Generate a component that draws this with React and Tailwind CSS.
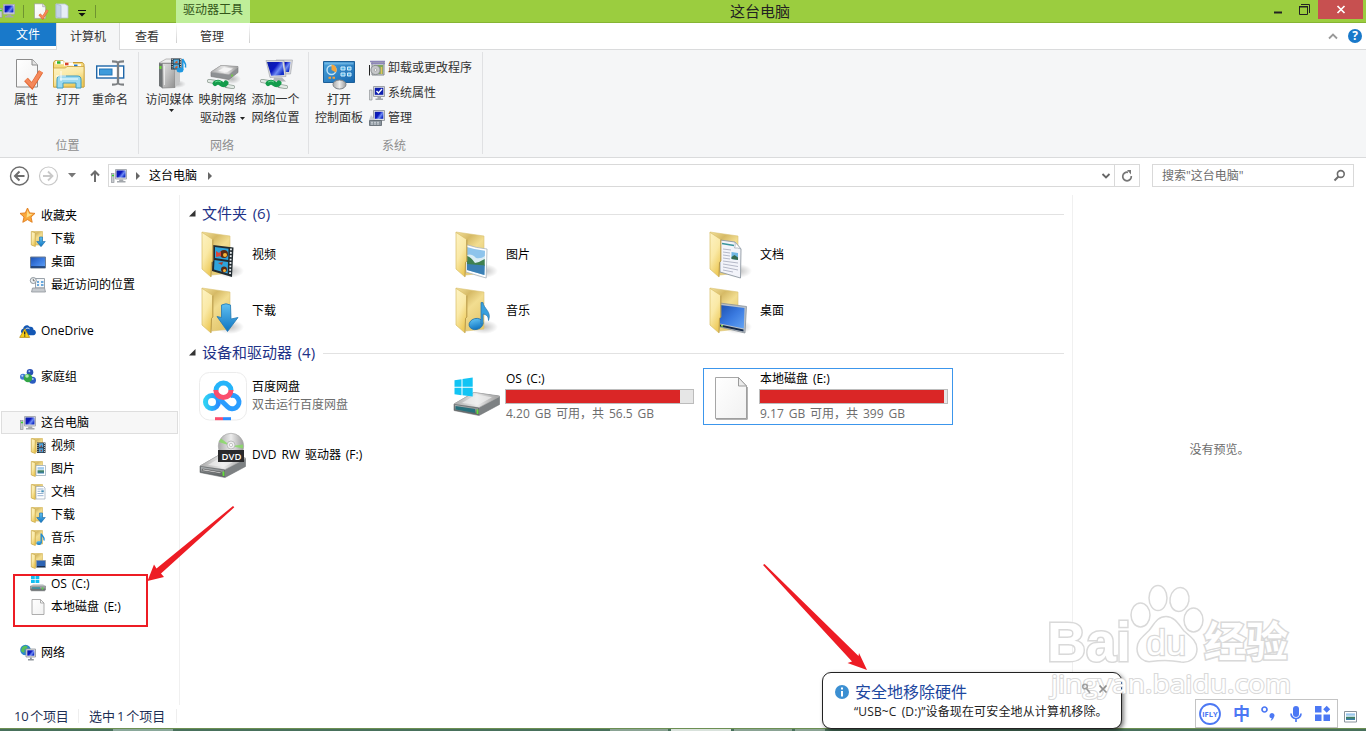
import React from 'react'

/* ---------- shared gradients ---------- */

function Gradients() {
  return (
    <svg className="absolute size-0" aria-hidden="true">
      <defs>
        <linearGradient id="flap" x1="0" y1="0" x2="0.5" y2="1">
          <stop offset="0" stopColor="#fdf3c4" /><stop offset="0.55" stopColor="#fae9a6" /><stop offset="1" stopColor="#eecb5c" />
        </linearGradient>
        <linearGradient id="back" x1="0" y1="0" x2="0.6" y2="1">
          <stop offset="0" stopColor="#f4e29c" /><stop offset="0.3" stopColor="#d6ba66" /><stop offset="0.55" stopColor="#f2dd90" /><stop offset="1" stopColor="#e4c870" />
        </linearGradient>
        <linearGradient id="blue" x1="0" y1="0" x2="0" y2="1">
          <stop offset="0" stopColor="#5fc0f2" /><stop offset="1" stopColor="#0f74c0" />
        </linearGradient>
        <linearGradient id="screen" x1="0" y1="0" x2="1" y2="0.6">
          <stop offset="0" stopColor="#0a1ea4" /><stop offset="0.5" stopColor="#0c18c0" /><stop offset="0.75" stopColor="#6f8cf4" /><stop offset="1" stopColor="#1430c8" />
        </linearGradient>
        <linearGradient id="desk" x1="0" y1="0" x2="1" y2="1">
          <stop offset="0" stopColor="#1c50b0" /><stop offset="0.5" stopColor="#3a7ae0" /><stop offset="1" stopColor="#64a4f4" />
        </linearGradient>
        <linearGradient id="metal" x1="0" y1="0" x2="1" y2="0">
          <stop offset="0" stopColor="#a8a8a8" /><stop offset="0.5" stopColor="#ececec" /><stop offset="1" stopColor="#9b9b9b" />
        </linearGradient>
        <linearGradient id="face" x1="0" y1="0" x2="1" y2="1">
          <stop offset="0" stopColor="#e2e2e2" /><stop offset="0.5" stopColor="#bcbcbc" /><stop offset="1" stopColor="#8e8e8e" />
        </linearGradient>
        <linearGradient id="side" x1="0" y1="0" x2="0" y2="1">
          <stop offset="0" stopColor="#b9bcbe" /><stop offset="1" stopColor="#55595b" />
        </linearGradient>
        <linearGradient id="paper" x1="0" y1="0" x2="1" y2="1">
          <stop offset="0" stopColor="#ffffff" /><stop offset="1" stopColor="#f1f1f1" />
        </linearGradient>
        <linearGradient id="sky" x1="0" y1="0" x2="0" y2="1">
          <stop offset="0" stopColor="#7fb6e8" /><stop offset="0.45" stopColor="#cfe7f4" /><stop offset="0.55" stopColor="#3f7f52" /><stop offset="1" stopColor="#3c80b8" />
        </linearGradient>
        <linearGradient id="panel" x1="0" y1="0" x2="1" y2="1">
          <stop offset="0" stopColor="#4aa3dc" /><stop offset="1" stopColor="#1767ae" />
        </linearGradient>
        <linearGradient id="ring" x1="0" y1="0" x2="1" y2="0">
          <stop offset="0" stopColor="#2fd0f4" /><stop offset="1" stopColor="#2a8dff" />
        </linearGradient>
        <radialGradient id="shade">
          <stop offset="0" stopColor="#000" stopOpacity="0.25" /><stop offset="1" stopColor="#000" stopOpacity="0" />
        </radialGradient>
      </defs>
    </svg>
  )
}

function Svg({ w = 16, h = w, box, className = '', children }) {
  return (
    <svg width={w} height={h} viewBox={box || `0 0 ${w} ${h}`} fill="none" className={`shrink-0 overflow-visible ${className}`}>
      {children}
    </svg>
  )
}

/* ---------- 16px icons ---------- */

const Pc = () => (
  <Svg>
    <rect x="0.5" y="5.500" width="2.500" height="9" fill="#c9ccd0" stroke="#90959a" strokeWidth="0.7" />
    <path d="M1 7.500h2" stroke="#39d22e" strokeWidth="1.4" />
    <path d="M4.500 1.500h11v9.500h-11z" fill="#dfe0e2" stroke="#a9adb3" />
    <path d="M5.500 2.500h9v7h-9z" fill="url(#screen)" />
    <path d="M8.500 11.500h3.500l.5 1.500h2v1.500H6V13h2z" fill="#a3a7ac" />
  </Svg>
)

const Star = () => (
  <Svg>
    <path d="M7.500 0l2.200 4.900 5.300.5-4 3.600 1.200 5.300-4.700-2.700-4.700 2.700L4 9 0 5.400l5.300-.5z" fill="#f9a83a" stroke="#e07a18" strokeWidth="0.9" />
    <path d="M7.500 2L9 5.800l3.500.4-6 3.500z" fill="#fde08a" />
  </Svg>
)

const SmallFolder = ({ children }) => (
  <Svg>
    <path d="M2 .500h10.500v13.500H2z" fill="url(#back)" stroke="#d5b555" strokeWidth="0.6" />
    <path d="M1.300.500l4 1.200V15.500L1.300 14z" fill="url(#flap)" stroke="#c9a748" strokeWidth="0.7" />
    {children}
  </Svg>
)

const FolderDown = () => (
  <SmallFolder><path d="M9.500 6h3v4.500h2.800L11 15.700 6.700 10.500h2.800z" fill="url(#blue)" stroke="#1a6cb0" strokeWidth="0.6" /></SmallFolder>
)
const FolderVideo = () => (
  <SmallFolder>
    <path d="M7 4.500h8.500v10.500H7z" fill="#2b3640" />
    <path d="M9 5.300h4.300v4H9zM9 10.300h4.300v4H9z" fill="#52a2d8" />
    <path d="M14.500 5v10M7.900 5v10" stroke="#dfe6ea" strokeWidth="0.8" strokeDasharray="1 1" />
    <path d="M10 8.500l2-1.500v2zM10 13l2-1.500v2z" fill="#a3412f" />
  </SmallFolder>
)
const FolderPicture = () => (
  <SmallFolder>
    <path d="M6 4.500h9.500v10H6z" fill="#fff" stroke="#8fa6b8" strokeWidth="0.7" />
    <path d="M7.500 6.300h6.500v6.200H7.500z" fill="url(#sky)" />
  </SmallFolder>
)
const FolderDoc = () => (
  <SmallFolder>
    <path d="M6 2.500h7.500l1.500 1.500v11H6z" fill="#fff" stroke="#9aa8b4" strokeWidth="0.7" />
    <path d="M7.500 5h6M7.500 7.300h3M7.500 9.500h6M7.500 11.700h6" stroke="#7f9fc4" strokeWidth="0.8" />
    <path d="M11.300 6.300h2.500v2h-2.500z" fill="#4790b8" />
  </SmallFolder>
)
const FolderMusic = () => (
  <SmallFolder>
    <ellipse cx="9" cy="13" rx="2.700" ry="2" fill="url(#blue)" />
    <path d="M11.200 13V3.500c.2 2.500 4 3.500 2.800 7" stroke="#238bd0" strokeWidth="1.400" />
  </SmallFolder>
)
const FolderDesk = () => (
  <SmallFolder>
    <path d="M6.500 7.500h9v7h-9z" fill="#2d64b4" stroke="#8c949c" strokeWidth="0.8" />
    <path d="M7 13.600h8" stroke="#1d2c44" />
  </SmallFolder>
)
const Desktop = () => (
  <Svg>
    <path d="M.5 3h15v11H.5z" fill="url(#desk)" stroke="#6d7d92" />
    <path d="M1 13h14" stroke="#14305e" strokeWidth="1.400" />
  </Svg>
)
const Recent = () => (
  <Svg>
    <path d="M5.500 1.500h9v9.500h-9z" fill="#f3f6f8" stroke="#9ba3ab" />
    <path d="M7 5h2M11 5h2.500M7 8h2M11 8h2.500" stroke="#3d8fd4" strokeWidth="1.500" />
    <circle cx="3.300" cy="3.500" r="3" fill="#eef1f3" stroke="#8c949b" />
    <path d="M3.300 1.800v2h1.500" stroke="#555" strokeWidth="0.8" />
    <path d="M2.500 11h12l1 4h-14z" fill="#c6cace" stroke="#90969c" strokeWidth="0.8" />
  </Svg>
)
const OneDrive = () => (
  <Svg>
    <path d="M2.500 10.500C0 9.500.8 6.200 3.200 5.800 3.500 2 8 .8 9.800 4c2-.6 3.700.7 3.700 2.800 3.300.4 3.200 5.400 0 5.400H6z" fill="#1357b4" />
    <path d="M4.500 8c.5-2.500 3-3.700 5-2.200" stroke="#fff" strokeWidth="0.9" />
    <path d="M4.700 5.700l5 8.700H-.3z" fill="#fcd116" stroke="#a87d08" strokeWidth="0.700" />
    <path d="M4.700 8.500v3M4.700 12.400v1" stroke="#222" strokeWidth="1.300" />
  </Svg>
)
const HomeGroup = () => (
  <Svg>
    <circle cx="10" cy="3.300" r="3.300" fill="#2750b4" />
    <circle cx="3" cy="7.800" r="3" fill="#3f78d4" />
    <circle cx="12.500" cy="11.300" r="3.500" fill="#2c5cc0" />
    <circle cx="8" cy="9" r="4.300" fill="#32a546" />
    <circle cx="9.300" cy="2.300" r="1" fill="#a8c6f4" />
    <circle cx="2.300" cy="6.800" r="1" fill="#b8d4f8" />
    <circle cx="7" cy="7" r="1.800" fill="#b2ebb0" />
    <circle cx="12.800" cy="10" r="1" fill="#9fc0f4" />
  </Svg>
)
const SmallDrive = () => (
  <Svg>
    <path d="M1 0h3.800v3.300H1zM5.500 0h3.800v3.300H5.500zM1 4h3.800v3H1zM5.500 4h3.800v3H5.500z" fill="#10bdf2" />
    <path d="M3 8h10l2.500 2.500H.5z" fill="#d5d8da" />
    <path d="M.5 10h15v4l-1 .8h-13l-1-.8z" fill="url(#side)" stroke="#73787b" strokeWidth="0.600" />
    <path d="M2 12h8" stroke="#2f8f9f" strokeWidth="1.400" />
    <path d="M12.500 11.500v2" stroke="#50e040" strokeWidth="1.400" />
  </Svg>
)
const SmallFile = () => (
  <Svg>
    <path d="M2 .5h8.500L14 4v11.500H2z" fill="url(#paper)" stroke="#9a9a9a" strokeWidth="0.800" />
    <path d="M10.500.5V4H14" stroke="#9a9a9a" strokeWidth="0.800" />
  </Svg>
)
const Network = () => (
  <Svg>
    <circle cx="5.500" cy="5" r="5.300" fill="#2c86cc" />
    <path d="M2 2.500c2-2.500 5-2.200 5.500-.5S4 3.500 4.500 6 2 7.500 1 6zM8 5.500l2-1v4z" fill="#56c058" />
    <path d="M6 4h9.500v8H6z" fill="#dfe1e4" stroke="#8f959b" strokeWidth="0.800" />
    <path d="M7.300 5.300h7v5.400h-7z" fill="url(#screen)" />
    <path d="M10 12.500h1.800v1.500h2v1.500H8V14h2z" fill="#8f969c" />
  </Svg>
)

/* ---------- title bar and ribbon icons ---------- */

const DocCheck = ({ size }) => (
  <Svg w={size} box="0 0 32 32">
    <path d="M6.500 1.500h16l5 5.500v22h-21z" fill="url(#paper)" stroke="#8c8c8c" />
    <path d="M22 1.500V7h5.500" fill="#e4e4e4" stroke="#8c8c8c" />
    <path d="M16 21.500l6 6.500L31 13.500" stroke="#e0632c" strokeWidth="5" />
    <path d="M16 21.500l6 6L31 13.500" stroke="#f4885a" strokeWidth="3.500" />
  </Svg>
)
const PaleFolder = () => (
  <Svg w={14} h={16}>
    <path d="M1 1h9l3 2v12H1z" fill="#e6edf6" stroke="#b7c4d6" strokeWidth="0.800" />
    <path d="M1 1l5 1.500V15l-5-1z" fill="#c3d2e6" stroke="#a9b9d0" strokeWidth="0.800" />
  </Svg>
)
const OpenFolder = () => (
  <Svg w={32}>
    <path d="M1.500 4.500L3 2.500h8l1.500 2h18l1.500 2V29h-30.500z" fill="#f5d97c" stroke="#c79a35" />
    <path d="M3.500 4.500h8M12 6h9M21 8h8" stroke="#fff" strokeWidth="3.500" />
    <path d="M5 4.500h3.500" stroke="#2fb32a" strokeWidth="2.500" />
    <path d="M13 6h3.500" stroke="#d8422d" strokeWidth="2.500" />
    <path d="M22 7.800h3.500" stroke="#1f77cf" strokeWidth="2.500" />
    <path d="M1.500 10h12l1.500-1.500h17V29h-30.500z" fill="url(#flap)" stroke="#cda43f" strokeWidth="0.800" />
    <path d="M5 30V22c0-3 1-4 4-4h16c3 0 4 1 4 4v8h-5v-5H11v5z" fill="#9ad9f0" stroke="#3d9dc4" />
    <path d="M8 21h18" stroke="#d8f3fc" strokeWidth="1.500" />
    <path d="M9 13v10M4 18h10" stroke="#fff" strokeWidth="0.900" />
  </Svg>
)
const Rename = () => (
  <Svg w={32}>
    <rect x="2.700" y="8" width="27" height="12" fill="#fff" stroke="#1f66a8" strokeWidth="1.400" />
    <rect x="5.500" y="11" width="12.500" height="6" fill="#3d9bdc" stroke="#2577b8" />
    <path d="M18 3.300c4 0 5.500.2 6 1.700.5-1.500 2-1.700 6-1.700M24 5v20M18 26.700c4 0 5.500-.2 6-1.700.5 1.500 2 1.700 6 1.700" stroke="#7c7f82" strokeWidth="2.300" />
  </Svg>
)
const MediaServer = () => (
  <Svg w={32}>
    <ellipse cx="23" cy="26" rx="9" ry="4" fill="url(#shade)" />
    <path d="M5 5L12 1h14l-6 4z" fill="#eeeeee" stroke="#aaa" strokeWidth="0.800" />
    <path d="M8 5.500h13v24L8 30z" fill="url(#face)" stroke="#888" strokeWidth="0.800" />
    <path d="M21 5.500l5-4V24l-5 5.500z" fill="#c6c7c8" />
    <path d="M5 5l3.500.5V30L5 28z" fill="#6f7375" />
    <path d="M10.500 8v19" stroke="#f0f0f0" strokeWidth="0.800" />
    <path d="M6.500 8v3" stroke="#6ad836" strokeWidth="2" />
    <rect x="17" y="0.500" width="10.500" height="11" fill="#26323c" />
    <path d="M19.500 1.500H25v4h-5.500zM19.500 6.500H25v4h-5.500z" fill="#4db0e4" />
    <path d="M20.500 4.500l3-2v3zM20.500 9.500l3-2v3z" fill="#d55a2c" />
    <path d="M18.200 1v10M26.400 1v10" stroke="#e8e8e8" strokeWidth="1" strokeDasharray="1.200 1.200" />
    <ellipse cx="26" cy="12" rx="3.400" ry="2.500" fill="#1e97e0" />
    <path d="M28.700 12V1c.500 3 4.300 4 2.800 8.500" stroke="#1e97e0" strokeWidth="1.600" />
  </Svg>
)
const Cable = () => (
  <>
    <path d="M2 23l7 1M19 28l7 1" stroke="#8b9a90" strokeWidth="4" strokeLinecap="round" />
    <path d="M2 23l6 1M20 28l6 1" stroke="#e1e9e4" strokeWidth="2.500" strokeLinecap="round" />
    <path d="M8 25.500q3-2.500 6 0t5-.500" stroke="#149c4c" strokeWidth="5" strokeLinecap="round" />
    <path d="M8 24q3-2 6 0" stroke="#5fd68c" strokeWidth="1" />
  </>
)
const MapDrive = () => (
  <Svg w={32}>
    <ellipse cx="25" cy="21" rx="9" ry="5" fill="url(#shade)" />
    <path d="M4 14L14 7.500l17 1v6L22 21.500 4 18.500z" fill="#8e9193" stroke="#777" strokeWidth="0.600" />
    <path d="M4 14L14 7.500l17 1.500-9 7.500z" fill="url(#metal)" stroke="#aaa" strokeWidth="0.600" />
    <path d="M11 13l6-3.500 9 1-6 3.700z" fill="#f4f4f4" />
    <path d="M25 16.500v2" stroke="#6ad836" strokeWidth="1.600" />
    <Cable />
  </Svg>
)
const AddPlace = () => (
  <Svg w={32}>
    <path d="M16 2h16.500l-2 14H17z" fill="#d9dadd" stroke="#a0a3a9" strokeWidth="0.600" />
    <path d="M18 4h12.500l-1.500 10h-9z" fill="url(#screen)" />
    <path d="M6 2.500h18l2 16-16 1z" fill="#d9dadd" stroke="#9b9fa6" strokeWidth="0.600" />
    <path d="M7 4h15.500l1.700 13-13 .8z" fill="url(#screen)" />
    <path d="M14 19.500h8l4 4H13z" fill="#b3b6ba" />
    <Cable />
  </Svg>
)
const ControlPanel = () => (
  <Svg w={32}>
    <path d="M.5 3.500h31v21H.5z" fill="url(#panel)" stroke="#1d5f98" />
    <path d="M1.500 4.500h29v2h-29z" fill="#8bcaf0" opacity="0.600" />
    <circle cx="8.500" cy="12" r="4.500" fill="none" stroke="#bfe3f7" strokeWidth="1.400" />
    <path d="M8.500 12V6.500a5.500 5.500 0 0 1 4.500 8z" fill="#f3a53c" />
    <path d="M18 9h4v3h-4zM24.500 9h3.500v3h-3.500zM18 15h4v3h-4zM24.500 15h3.500v3h-3.500z" fill="#50b4e8" stroke="#d2ecfa" />
    <path d="M5.500 19.700h2.500M9.500 19.700h2.500" stroke="#f5a03a" strokeWidth="2" />
    <ellipse cx="16.500" cy="26.500" rx="6.500" ry="4.500" fill="url(#metal)" stroke="#7e8388" />
  </Svg>
)
const Uninstall = () => (
  <Svg>
    <path d="M3 2h12v13H3z" fill="#cfd2d6" stroke="#82878c" />
    <path d="M1 1.500h15M2 3.500h14" stroke="#8d86b8" strokeWidth="1.600" />
    <path d="M5 5h9v9H5z" fill="#7fa85c" />
    <circle cx="6.500" cy="10" r="4.600" fill="#c6c8ca" stroke="#8b8f92" />
    <circle cx="6.500" cy="10" r="1.300" fill="#fff" stroke="#888" strokeWidth="0.600" />
    <path d="M.5 5v10.500" stroke="#222" />
    <path d="M12.500 7v7" stroke="#e3c25c" strokeWidth="1.500" />
  </Svg>
)
const SysProps = () => (
  <Svg>
    <path d="M.5 5h2.500v10H.5z" fill="#d8dadc" stroke="#92969a" strokeWidth="0.700" />
    <path d="M4.500 1.500h11v10h-11z" fill="#dfe0e2" stroke="#9da1a7" />
    <path d="M5.800 2.800h8.500v7H5.800z" fill="#0e1fae" />
    <path d="M7.500 6l2 2 3.500-4" stroke="#fff" strokeWidth="1.400" />
    <path d="M8.500 12h3.500v1.500h2V15H6.500v-1.500h2z" fill="#a3a7ac" />
  </Svg>
)
const Manage = () => (
  <Svg>
    <path d="M4.500.5h11v10h-11z" fill="#dfe0e2" stroke="#9da1a7" />
    <path d="M5.800 1.800h8.500v7H5.800z" fill="url(#screen)" />
    <path d="M2 5l4 5H0z" fill="#c9ced2" />
    <path d="M.5 10.500h12v5H.5z" fill="#8c969e" stroke="#59636b" strokeWidth="0.800" />
    <path d="M2 12.300h9M2 14h9" stroke="#dfe5ea" strokeWidth="0.800" strokeDasharray="2 1" />
  </Svg>
)

/* ---------- 48px icons ---------- */

const BigFolder = ({ children }) => (
  <Svg w={48}>
    <ellipse cx="30" cy="41" rx="14" ry="7" fill="url(#shade)" />
    <path d="M2 2l28 4v37l-18 2z" fill="url(#back)" stroke="#dcc476" strokeWidth="0.600" />
    {children}
    <path d="M2 2.300L12.800 9.500V31l-1.300 1.500-.5 14.500L2 39z" fill="url(#flap)" stroke="#d9bd66" strokeWidth="0.700" />
    <path d="M12.800 9.500V31l-1.300 1.500-.5 14" stroke="#a98a3c" strokeWidth="0.700" />
  </Svg>
)
const BigVideo = () => (
  <BigFolder>
    <path d="M13 15l20.500 2.500L32 47l-20-6z" fill="#222b30" />
    <path d="M15 17l13.500 1.700-.3 11.300L15 28zM14.500 30l13.500 2-.3 11.500L14 39.500z" fill="#2fa4dc" />
    <circle cx="24" cy="24" r="4" fill="#5c2a14" /><circle cx="25" cy="25" r="2" fill="#f2b53a" />
    <path d="M16 21l3 2 2-2v5l-5 1z" fill="#d9463c" />
    <circle cx="24" cy="39.500" r="3" fill="#5c2a14" /><circle cx="24.500" cy="40.500" r="1.500" fill="#f2b53a" />
    <path d="M18 33l5-1-1 3z" fill="#b03a2c" />
    <path d="M31 18.500l-1 27" stroke="#eef2f4" strokeWidth="1.800" strokeDasharray="1.800 1.600" />
  </BigFolder>
)
const BigPicture = () => (
  <BigFolder>
    <path d="M12 14.500q10 3.500 21 4.500l-.8 29-20.200-6z" fill="#fff" stroke="#a8b4bd" strokeWidth="0.800" />
    <path d="M13 17q9 3 18 3.800l-.6 24.200L13 40z" fill="#8ec4ec" />
    <path d="M13 25q5-2 9 3 5 1 9-2v8l-18 1z" fill="#d9ecf4" />
    <path d="M13 26q4 1 8 7 5-1 9.700-4v7L13 35z" fill="#3f8050" />
    <path d="M13 34l17.700 1.500-.3 9.500L13 40z" fill="#3a7fb4" />
  </BigFolder>
)
const BigDoc = () => (
  <BigFolder>
    <path d="M12 10l15 2 6 7-.5 29L12 42z" fill="#f3f4fa" stroke="#8e98a2" strokeWidth="0.900" />
    <path d="M27 12c.500 3 0 5-.5 6q3-.5 6.500 1z" fill="#fff" stroke="#9aa4ae" strokeWidth="0.700" />
    <path d="M14 13.500l12 2" stroke="#38949c" strokeWidth="1.300" />
    <path d="M15 19l8 1M15 22l7 1M15 25l7 1M15 28l7 1M15 31l15 2M15 34l15 2.500M15 37l15 3M15 40l10 2" stroke="#b5b9c8" strokeWidth="1" />
    <path d="M23.500 22l6.500 1v7l-6.500-1z" fill="#6fb6e4" /><path d="M23.500 27l3-2 3.500 2.500V30l-6.500-1z" fill="#356b50" />
  </BigFolder>
)
const BigDown = () => (
  <BigFolder>
    <path d="M21.500 19q4.500-2.500 9 0L31 33l7-1.500L27.500 45.500 17 30.500l4.500 1z" fill="url(#blue)" stroke="#2278b4" strokeWidth="0.800" />
  </BigFolder>
)
const BigMusic = () => (
  <BigFolder>
    <ellipse cx="22" cy="38" rx="7" ry="5.500" transform="rotate(-15 22 38)" fill="url(#blue)" stroke="#2673aa" strokeWidth="0.800" />
    <path d="M27 38V16.500h2c.5 6 9 9 5.500 18 0-5-3-6-5.500-6.500V38z" fill="#389fdd" stroke="#2673aa" strokeWidth="0.700" />
  </BigFolder>
)
const BigDesk = () => (
  <BigFolder>
    <path d="M12 17l26.500 3.500L37 47 12 41z" fill="#b9c0c7" stroke="#7f8891" strokeWidth="0.700" />
    <path d="M12 19l24.500 3-.7 20.500L12 37.500z" fill="url(#desk)" />
    <path d="M12 38.500l23.500 5v2L12 40.500z" fill="#152947" />
    <path d="M13 39.500l2 .5" stroke="#8ee04a" strokeWidth="1.500" />
  </BigFolder>
)
const Netdisk = () => (
  <Svg w={48}>
    <rect x="-0.500" y="-0.500" width="47" height="47.500" rx="10" fill="#fff" stroke="#ececec" />
    <circle cx="12" cy="29" r="6.500" stroke="url(#ring)" strokeWidth="5" />
    <path d="M30 22.700a6.700 6.700 0 1 1-2.500 11L17.500 24" stroke="#2a9dff" strokeWidth="5" />
    <path d="M16 17.500a7.500 7.500 0 0 1 15 0" stroke="#25b4fa" strokeWidth="5" />
    <path d="M15.800 17a7.600 7.600 0 0 0 15.200 0" stroke="#fb4d6d" strokeWidth="5" />
    <path d="M15 45.700h8" stroke="#fb4d6d" strokeWidth="3" /><path d="M23 45.700h8" stroke="#2a8dff" strokeWidth="3" />
  </Svg>
)
const DriveBody = ({ teal }) => (
  <>
    <path d="M0 31L20 19.500l25.500 3.500v8.500L25 42.500 0 37.500z" fill="#7d8183" stroke="#6e7274" strokeWidth="0.600" />
    <path d="M0 31L20 19.500l25.500 4L25 34.500z" fill="url(#metal)" stroke="#b6b6b6" strokeWidth="0.600" />
    <path d="M8 30l14-8.500 16 2.800L24 32z" fill="#f0f0f0" opacity="0.700" />
    <path d="M.500 31.500l24 3.500v6.500L.500 37z" fill="url(#side)" stroke="#5b5f61" strokeWidth="0.600" />
    {teal ? <path d="M1.500 33L21 36v4L1.500 36.500z" fill="#27707c" /> : <path d="M2.500 34L21 37.200v1.300L2.500 35.500z" fill="#f4f4f4" stroke="#333" strokeWidth="0.500" />}
    <path d="M23.500 36.500v4.500" stroke="#63e03a" strokeWidth="1.800" />
  </>
)
const OsDrive = () => (
  <Svg w={48}>
    <DriveBody teal />
    <path d="M.500 7.200l7-1v7.500h-7zM8.500 6L18.700 4.500v9.200H8.500zM.500 14.700h7v7.500l-7-1zM8.500 14.700h10.200V23.500l-10.200-1.200z" fill="#12c4f4" />
  </Svg>
)
const Dvd = () => (
  <Svg w={48}>
    <g transform="translate(0 5)"><DriveBody /></g>
    <circle cx="31" cy="16" r="12.700" fill="url(#metal)" stroke="#a8a8a8" strokeWidth="0.700" />
    <path d="M31 16L19 12l2-3.500zM31 16l12 2.500v-4z" fill="#86dc62" opacity="0.800" />
    <circle cx="31" cy="15" r="4" fill="#eee" stroke="#aaa" strokeWidth="0.700" /><circle cx="31" cy="15" r="1.600" fill="#fff" stroke="#999" strokeWidth="0.500" />
    <path d="M18 20h26v12H18z" fill="#2a2a2c" />
    <text x="31.500" y="29.500" textAnchor="middle" fontSize="9.500" fill="#fff" className="font-['Open_Sans',sans-serif] font-semibold">DVD</text>
  </Svg>
)
const BigFile = () => (
  <Svg w={48}>
    <path d="M7.500 4.500h23l8 8.500v32.500h-31z" fill="url(#paper)" stroke="#a6a6a6" />
    <path d="M8 46.300h31.300V14" stroke="#777" strokeWidth="0.700" />
    <path d="M30.500 4.500V13h8z" fill="#ebebeb" stroke="#9b9b9b" />
  </Svg>
)

/* ---------- data ---------- */

const FOLDERS = [
  { name: '视频', Icon: BigVideo }, { name: '图片', Icon: BigPicture }, { name: '文档', Icon: BigDoc },
  { name: '下载', Icon: BigDown },  { name: '音乐', Icon: BigMusic },   { name: '桌面', Icon: BigDesk },
]

const DEVICES = [
  { name: '百度网盘', Icon: Netdisk, note: '双击运行百度网盘' },
  { name: 'OS (C:)', Icon: OsDrive, used: 93, note: '4.20 GB 可用，共 56.5 GB' },
  { name: '本地磁盘 (E:)', Icon: BigFile, used: 98.4, note: '9.17 GB 可用，共 399 GB', selected: true },
  { name: 'DVD RW 驱动器 (F:)', Icon: Dvd },
]

// null leaves an empty row between the tree's sections
const TREE = [
  { name: '收藏夹', Icon: Star },
  { name: '下载', Icon: FolderDown, child: true },
  { name: '桌面', Icon: Desktop, child: true },
  { name: '最近访问的位置', Icon: Recent, child: true },
  null,
  { name: 'OneDrive', Icon: OneDrive },
  null,
  { name: '家庭组', Icon: HomeGroup },
  null,
  { name: '这台电脑', Icon: Pc, selected: true },
  { name: '视频', Icon: FolderVideo, child: true },
  { name: '图片', Icon: FolderPicture, child: true },
  { name: '文档', Icon: FolderDoc, child: true },
  { name: '下载', Icon: FolderDown, child: true },
  { name: '音乐', Icon: FolderMusic, child: true },
  { name: '桌面', Icon: FolderDesk, child: true },
  { name: 'OS (C:)', Icon: SmallDrive, child: true },
  { name: '本地磁盘 (E:)', Icon: SmallFile, child: true },
  null,
  { name: '网络', Icon: Network },
]

/* ---------- window chrome ---------- */

function TitleBar() {
  return (
    <header className="flex h-[23px] border-b border-[#86b533] bg-[#9bcd3f]">
      <div className="flex w-[176px] items-center">
        <div className="-ml-px flex w-[24px] items-center"><Pc /></div>
        <div className="h-[13px] w-px bg-[#6f9430]" />
        <div className="ml-[7px]"><DocCheck size={17} /></div>
        <div className="ml-[7px]"><PaleFolder /></div>
        <Svg w={8} h={7} className="ml-[9px] mt-[4px]"><path d="M0 .5h8" stroke="#111" /><path d="M.5 3h7L4 6.500z" fill="#111" /></Svg>
        <div className="ml-[9px] h-[13px] w-px bg-[#6f9430]" />
      </div>
      <div className="h-[23px] w-[74px] bg-[#bfee99] text-center leading-[20px] text-[#33561a]">驱动器工具</div>
      <div className="flex-1 pl-[480px] text-[15px] leading-[22px] text-[#222]">这台电脑</div>
      <div className="flex">
        <Svg w={9} h={3} className="mr-[16px] mt-[11px]"><path d="M0 1.500h8" stroke="#222" strokeWidth="2" /></Svg>
        <Svg w={11} h={11} className="mr-[8px] mt-[4px]"><path d="M.5 3v7.500h8V3zM0 2.500h9" stroke="#222" /><path d="M2 .5h8.500V9" stroke="#222" /></Svg>
        <div className="mr-[3px] flex h-[19px] w-[45px] items-center justify-center bg-[#c75050]">
          <Svg w={8} h={7}><path d="M.5 0l7 7M7.500 0l-7 7" stroke="#fff" strokeWidth="1.700" /></Svg>
        </div>
      </div>
    </header>
  )
}

function RibbonTabs() {
  return (
    <nav className="flex h-[27px] bg-white text-center leading-[27px] text-[#333]">
      <div className="flex h-full w-[56px] flex-col border-b border-[#dadbdc]"><div className="h-[23px] bg-[#1979ca] leading-[23px] text-white">文件</div></div>
      <div className="w-[64px] border-x border-[#dadbdc] bg-[#f5f6f7]">计算机</div>
      <div className="w-[56px] border-b border-[#dadbdc] pr-[2px]">查看</div>
      <div className="flex w-[74px] border-b border-[#dadbdc]">
        <div className="h-[20px] w-px bg-gradient-to-b from-white to-[#d0d0d0]" />
        <div className="flex-1 pr-[2px]">管理</div>
        <div className="h-[20px] w-px bg-gradient-to-b from-white to-[#d0d0d0]" />
      </div>
      <div className="flex flex-1 items-center justify-end border-b border-[#dadbdc] pr-[4px]">
        <Svg w={10} h={6} className="mr-[10px]"><path d="M1 5.500l4-4 4 4" stroke="#999" strokeWidth="1.800" /></Svg>
        <div className="size-[14px] rounded-full bg-[#1979ca] text-[12px] font-bold leading-[14px] text-white">?</div>
      </div>
    </nav>
  )
}

function RibbonButton({ icon, lines, caret, className }) {
  return (
    <div className={`flex flex-col items-center text-center leading-[18px] text-[#333] ${className}`}>
      <div className="mb-[1px] h-[32px]">{icon}</div>
      {lines.map((line, i) => (
        <div key={line} className="flex items-center whitespace-nowrap">
          {line}
          {caret === 'inline' && i === lines.length - 1 && <Svg w={5} h={3} className="ml-[4px]"><path d="M0 0h5L2.500 3z" fill="#222" /></Svg>}
        </div>
      ))}
      {caret === 'below' && <Svg w={5} h={3} className="ml-[3px]"><path d="M0 0h5L2.500 3z" fill="#222" /></Svg>}
    </div>
  )
}

function RibbonGroup({ label, className, children }) {
  return (
    <section className={`flex h-full ${className}`}>
      <div className="flex flex-1 flex-col justify-between">
        <div className="flex pt-[8px]">{children}</div>
        <div className="pb-[3px] pr-[3px] text-center leading-[16px] text-[#8e8e8e]">{label}</div>
      </div>
      <div className="mt-[2px] h-[102px] w-px bg-[#e0e1e3]" />
    </section>
  )
}

function Ribbon() {
  return (
    <div className="flex h-[108px] border-b border-[#dadbdc] bg-[#f5f6f7]">
      <RibbonGroup label="位置" className="w-[139px]">
        <RibbonButton className="ml-[5px] w-[42px]" icon={<DocCheck size={32} />} lines={['属性']} />
        <RibbonButton className="w-[42px]" icon={<OpenFolder />} lines={['打开']} />
        <RibbonButton className="w-[42px]" icon={<Rename />} lines={['重命名']} />
      </RibbonGroup>
      <RibbonGroup label="网络" className="w-[170px]">
        <RibbonButton className="ml-[4px] w-[53px]" icon={<MediaServer />} lines={['访问媒体']} caret="below" />
        <RibbonButton className="w-[53px]" icon={<MapDrive />} lines={['映射网络', '驱动器']} caret="inline" />
        <RibbonButton className="w-[53px]" icon={<AddPlace />} lines={['添加一个', '网络位置']} />
      </RibbonGroup>
      <RibbonGroup label="系统" className="w-[174px]">
        <RibbonButton className="ml-[4px] w-[52px]" icon={<ControlPanel />} lines={['打开', '控制面板']} />
        <div className="ml-[4px] flex flex-col text-[#333]">
          {[['卸载或更改程序', Uninstall], ['系统属性', SysProps], ['管理', Manage]].map(([text, Icon]) => (
            <div key={text} className="mb-[5px] flex h-[20px] items-center gap-[3px]"><Icon />{text}</div>
          ))}
        </div>
      </RibbonGroup>
    </div>
  )
}

const Crumb = () => <Svg w={5} h={8}><path d="M0 0l4 4-4 4z" fill="#666" /></Svg>

function AddressBar() {
  return (
    <div className="flex h-[37px] items-start pt-[6px]">
      <div className="flex h-[23px] w-[108px] items-center pl-[9px]">
        <Svg w={20}><circle cx="10.500" cy="10" r="9" stroke="#6d6d6d" strokeWidth="1.400" /><path d="M15.500 10H6.500M10.500 5.500L6 10l4.500 4.500" stroke="#6d6d6d" strokeWidth="2" /></Svg>
        <Svg w={20} className="ml-[9px]"><circle cx="10.500" cy="10" r="9" stroke="#c9c9c9" strokeWidth="1.200" /><path d="M5 10h9M10 5.500l4.500 4.500-4.500 4.500" stroke="#c9c9c9" strokeWidth="1.800" /></Svg>
        <Svg w={8} h={5} className="ml-[10px]"><path d="M0 0h8L4 4.500z" fill="#777" /></Svg>
        <Svg w={10} h={12} className="ml-[14px]"><path d="M5 12V2M1 5.500l4-4 4 4" stroke="#6d6d6d" strokeWidth="2" /></Svg>
      </div>
      <div className="flex h-[23px] w-[1032px] border border-[#d9d9d9]">
        <div className="flex flex-1 items-center pl-[2px] leading-[21px]">
          <Pc /><span className="ml-[9px]"><Crumb /></span>
          <span className="-mt-px ml-[8px] mr-[11px]">这台电脑</span><Crumb />
        </div>
        <div className="flex w-[17px] items-center justify-center"><Svg w={8} h={6}><path d="M.5 1L4 4.500 7.500 1" stroke="#666" strokeWidth="1.800" /></Svg></div>
        <div className="flex w-[25px] items-center justify-center border-l border-[#d9d9d9]">
          <Svg w={12}><path d="M7 2.300A4.300 4.300 0 1 0 10.300 6" stroke="#777" strokeWidth="1.700" /><path d="M6 0h4v4.500z" fill="#777" /></Svg>
        </div>
      </div>
      <div className="ml-[12px] flex h-[23px] w-[202px] items-center justify-between border border-[#d9d9d9] pl-[9px] pr-[8px] text-[#6d6d6d]">
        搜索"这台电脑"
        <Svg w={11}><circle cx="6.800" cy="4" r="3.400" stroke="#6d6d6d" strokeWidth="1.600" /><path d="M4.500 6.500L.5 10.500" stroke="#6d6d6d" strokeWidth="2" /></Svg>
      </div>
    </div>
  )
}

/* ---------- content ---------- */

function Sidebar() {
  return (
    <aside className="w-[180px] border-r border-[#f0f0f0] pt-[9px]">
      {TREE.map((row, i) => {
        if (!row) return <div key={i} className="h-[23px]" />
        const { name, Icon, child, selected } = row
        return (
          <div
            key={i}
            className={`ml-px flex h-[23px] w-[177px] items-center border leading-[21px] ${selected ? 'border-[#dedede] bg-[#f7f7f7]' : 'border-transparent'} ${child ? 'pl-[28px]' : 'pl-[18px]'}`}
          >
            <Icon />
            <span className="ml-[5px]">{name}</span>
          </div>
        )
      })}
    </aside>
  )
}

function GroupHeader({ title }) {
  return (
    <div className="flex h-[20px] items-center pl-[9px] text-[15px] leading-[20px] text-[#1e3287]">
      <Svg w={7} h={7} className="-mt-[2px] mr-[6px]"><path d="M6.500 0v6.500H0z" fill="#333" /></Svg>
      <span className="-mt-[2px]">{title}</span>
      <div className="ml-[8px] mr-[8px] h-px flex-1 bg-[#e2e2e2]" />
    </div>
  )
}

function Tile({ item }) {
  const { name, Icon, used, note, selected } = item
  return (
    <div className={`flex w-[250px] items-center border pl-[4px] ${selected ? 'border-[#3c96ec]' : 'border-transparent'}`}>
      <Icon />
      <div className={`ml-[4px] leading-[18px] ${note ? '' : 'pt-[2px]'} ${note && !used ? 'pb-[1px]' : ''}`}>
        <div>{name}</div>
        {used && (
          <div className="my-[1px] -ml-px h-[15px] w-[189px] border border-[#bcbcbc] bg-[#e6e6e6]">
            <div className="h-full bg-[#da2626]" style={{ width: `${used}%` }} />
          </div>
        )}
        {note && <div className="whitespace-nowrap text-[#6d6d6d]">{note}</div>}
      </div>
    </div>
  )
}

function Content() {
  return (
    <main className="w-[892px] pt-[9px]">
      <GroupHeader title="文件夹 (6)" />
      <div className="ml-[15px] mt-[2px] grid auto-rows-[56px] grid-cols-[254px_254px_254px]">
        {FOLDERS.map(f => <Tile key={f.name} item={f} />)}
      </div>
      <div className="mt-[5px]"><GroupHeader title="设备和驱动器 (4)" /></div>
      <div className="ml-[15px] mt-[5px] grid auto-rows-[57px] grid-cols-[254px_254px_254px]">
        {DEVICES.map(d => <Tile key={d.name} item={d} />)}
      </div>
    </main>
  )
}

function StatusBar() {
  return (
    <footer className="flex h-[23px] items-center text-[13px] text-[#1e2f55] [word-spacing:-1.500px]">
      <span className="-mt-[2px] w-[79px] whitespace-nowrap border-r border-[#eee] pl-[14px] leading-[14px] tracking-[-0.200px]">10 个项目</span>
      <span className="-mt-[2px] w-[98px] whitespace-nowrap border-r border-[#eee] pl-[10px] leading-[14px]">选中 1 个项目</span>
      <Svg w={14} h={12} className="ml-auto mr-[8px]">
        <path d="M.5.5h12v10.500H.5z" fill="#fff" stroke="#8a949c" />
        <path d="M2 2.500h9v6.500H2z" fill="url(#sky)" />
      </Svg>
    </footer>
  )
}

function Taskbar() {
  return (
    <div className="flex h-[3px] border-t border-[#6d8f52] bg-[#47705b]">
      <div className="ml-[113px] h-full w-[60px] bg-[#8aa89b]" />
      <div className="ml-[437px] h-full w-[58px] bg-[#8aa394]" />
      <div className="ml-[3px] h-full w-[60px] bg-[#d9e2dc]" />
      <div className="ml-[3px] h-full w-[58px] bg-[#8aa394]" />
      <div className="ml-[3px] h-full w-[30px] bg-[#8aa394]" />
    </div>
  )
}

/* ---------- things that float over the window ---------- */

function Balloon() {
  return (
    <div className="absolute left-[822px] top-[672px] h-[57px] w-[300px] rounded-[9px] border border-[#222] bg-white pl-[12px] pt-[9px] shadow-[2px_2px_4px_rgba(0,0,0,0.5)]">
      <div className="flex h-[20px] items-center text-[16px] leading-[20px] text-[#1e489f]">
        <Svg w={14} className="mr-[6px]"><circle cx="7" cy="7" r="7" fill="#3b8fd2" /><path d="M7 2.500v2M7 6v5.500" stroke="#fff" strokeWidth="2" /></Svg>
        安全地移除硬件
      </div>
      <div className="ml-[19px] whitespace-nowrap leading-[19px] tracking-[0.15px] text-[#222]">“USB~C (D:)”设备现在可安全地从计算机移除。</div>
    </div>
  )
}

// drawn above the watermark, as its strokes would hide them
function BalloonButtons() {
  return (
    <div className="absolute left-[1081px] top-[683px] flex items-center gap-[8px] opacity-80">
      <Svg w={10} h={11}><circle cx="4" cy="3.500" r="2.300" stroke="#8a8a8a" strokeWidth="1.600" /><path d="M5 5l4 5" stroke="#8a8a8a" strokeWidth="1.800" /></Svg>
      <Svg w={8} h={8}><path d="M.5.5l7 7M7.500.5l-7 7" stroke="#777" strokeWidth="1.700" /></Svg>
    </div>
  )
}

function InputBar() {
  return (
    <div className="absolute left-[1195px] top-[699px] flex h-[29px] w-[143px] items-center border border-[#c4c4c4] bg-white pl-[3px] text-[#4c78f4]">
      <Svg w={22}>
        <circle cx="11" cy="11" r="10" stroke="#4c78f4" strokeWidth="1.800" />
        <text x="11" y="14" textAnchor="middle" fontSize="7.500" fill="#4c78f4" className="font-['Open_Sans',sans-serif] font-bold">iFLY</text>
      </Svg>
      <span className="ml-[12px] text-[17px] font-bold leading-[20px]">中</span>
      <Svg w={14} h={15} className="ml-[11px]"><circle cx="3.500" cy="3.500" r="2.500" stroke="#4c78f4" strokeWidth="1.700" /><path d="M8.500 9.500a2.500 2.500 0 1 1 4.500 1.500q-.5 2.700-3.300 4l1-2.900a2.200 2.200 0 0 1-2.200-2.600z" fill="#4c78f4" /></Svg>
      <Svg w={12} h={16} className="ml-[15px]"><rect x="3" y="0" width="6" height="11" rx="3" fill="#4c78f4" /><path d="M1 7.500a5 5 0 0 0 10 0M6 12.500V16" stroke="#4c78f4" strokeWidth="1.700" /></Svg>
      <Svg w={15} className="ml-[13px]"><path d="M0 0h6.500v6.500H0zM0 8.500h6.500V15H0zM8.500 8.500H15V15H8.500zM11.700-.3l3.500 3.500-3.500 3.500-3.500-3.500z" fill="#4c78f4" /></Svg>
    </div>
  )
}

function Watermark() {
  return (
    <svg className="absolute left-[1040px] top-[575px]" width="265" height="130" viewBox="1040 575 265 130" fill="#fff" stroke="#d9d9d9" strokeWidth="1.500">
      <g paintOrder="stroke" strokeWidth="3">
        <text x="1047" y="661" fontSize="55" textLength="84" lengthAdjust="spacingAndGlyphs" className="font-['Liberation_Sans',sans-serif] font-bold">Bai</text>
        <text x="1204" y="657" fontSize="42" textLength="84" lengthAdjust="spacingAndGlyphs" className="font-['Noto_Sans_CJK_SC',sans-serif] font-bold">经验</text>
      </g>
      <ellipse cx="1140.500" cy="615" rx="9.500" ry="12" />
      <ellipse cx="1158" cy="598" rx="9" ry="12.500" />
      <ellipse cx="1179.500" cy="599.500" rx="9.500" ry="12" transform="rotate(10 1179.500 599.500)" />
      <ellipse cx="1193.500" cy="620" rx="9.500" ry="12" />
      <path d="M1166 616.500c-9 0-12 8-17 14-6 6-12 10-12 18 0 9 7 14 14 13 10-1.500 20-1.500 30 .5 9 1 16-4 16-13 0-8-6-12-13-18-5-6-9-14.500-18-14.500z" />
      <text x="1166" y="655" fontSize="35" textAnchor="middle" textLength="40" lengthAdjust="spacingAndGlyphs" paintOrder="stroke" strokeWidth="2.500" className="font-['Liberation_Sans',sans-serif]">du</text>
      <text x="1051" y="693" fontSize="26" textLength="240" lengthAdjust="spacingAndGlyphs" paintOrder="stroke" strokeWidth="2" className="font-['Open_Sans',sans-serif]">jingyan.baidu.com</text>
    </svg>
  )
}

function Annotations() {
  return (
    <svg className="absolute left-0 top-0" width="1366" height="731" fill="none">
      <rect x="14" y="575" width="133" height="51" stroke="#ed1c24" strokeWidth="2" />
      <path d="M233 506l1.300 1.300L161 573.500l3 3.500L147.500 581l6.500-16.500 2.500 4z" fill="#ed1c24" />
      <path d="M763 565l1.500-1L858.500 656l.5-3 8 17-19.500-7 4.500-1.500z" fill="#ed1c24" />
    </svg>
  )
}

export default function App() {
  return (
    <div className="relative flex h-[731px] w-[1366px] flex-col overflow-hidden bg-white font-['Open_Sans','Noto_Sans_CJK_SC',sans-serif] text-[12px] text-black [word-spacing:1.800px]">
      <Gradients />
      <TitleBar />
      <RibbonTabs />
      <Ribbon />
      <AddressBar />
      <div className="flex h-[510px]">
        <Sidebar />
        <Content />
        <div className="flex flex-1 items-center justify-center border-l border-[#f0f0f0] text-[#6d6d6d]">没有预览。</div>
      </div>
      <StatusBar />
      <Taskbar />
      <Balloon />
      <InputBar />
      <Watermark />
      <BalloonButtons />
      <Annotations />
    </div>
  )
}
